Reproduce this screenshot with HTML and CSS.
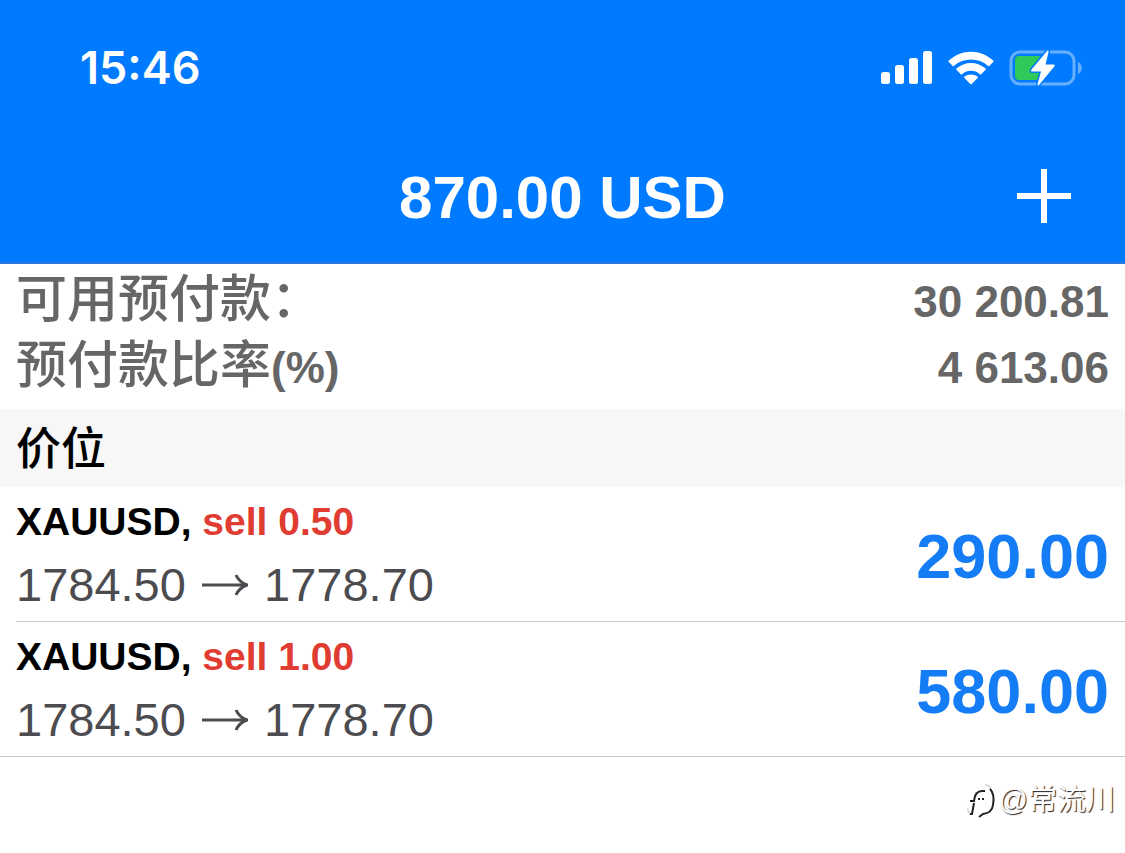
FILE: index.html
```html
<!DOCTYPE html>
<html lang="zh-CN">
<head>
<meta charset="utf-8">
<meta name="viewport" content="width=device-width, initial-scale=1">
<title>870.00 USD</title>
<link rel="stylesheet" href="styles.css">
</head>
<body>
<header class="header">
  <div class="status">
    <time class="clock">15:46</time>
    <div class="indicators">
      <svg class="signal" viewBox="0 0 52 34" aria-hidden="true">
        <rect x="0" y="21" width="9" height="12" rx="2.5"/>
        <rect x="14" y="14" width="9" height="19" rx="2.5"/>
        <rect x="28" y="7" width="9" height="26" rx="2.5"/>
        <rect x="42" y="0" width="9" height="33" rx="2.5"/>
      </svg>
      <svg class="wifi" viewBox="0 0 46 34" aria-hidden="true">
        <path d="M.6 9.800C13-2.400 33-2.400 45.400 9.800Q45.900 10.300 45.400 10.800L41.300 14.900Q40.700 15.500 40.100 14.900C30.500 6.500 15.500 6.500 5.900 14.900Q5.300 15.500 4.700 14.900L.6 10.800Q.1 10.300.6 9.800Z"/>
        <path d="M8.400 17.600C16.500 10 29.500 10 37.600 17.600Q38.200 18.200 37.600 18.800L33.200 23.200Q32.600 23.700 32 23.200C27 18.700 19 18.700 14 23.200Q13.400 23.700 12.800 23.200L8.400 18.800Q7.800 18.200 8.400 17.600Z"/>
        <path d="M16.400 25.700C20.200 22.600 25.800 22.600 29.600 25.700Q30.300 26.300 29.600 27L23.700 33Q23 33.700 22.300 33L16.400 27Q15.700 26.300 16.400 25.700Z"/>
      </svg>
      <svg class="battery" viewBox="0 0 74 38" aria-hidden="true">
        <rect class="battery-case" x="2" y="3" width="63" height="32" rx="9"/>
        <path class="battery-tip" d="M69 13C74 15 74 23 69 25Z"/>
        <rect class="battery-level" x="6" y="7" width="27" height="24" rx="4"/>
        <path class="battery-bolt" d="M38.500 1.500Q40 .5 39.500 3L36.500 15.500H44.500Q46.500 15.500 45.300 17.500L30 36Q28 37.500 28.600 35L32 22.500H23.500Q21 22.500 22.700 20.200Z"/>
      </svg>
    </div>
  </div>
  <div class="navbar">
    <h1 class="title">870.00 USD</h1>
    <button class="add" type="button" aria-label="添加">
      <svg class="plus" viewBox="0 0 54 54" aria-hidden="true"><path d="M27 0V54M0 27H54"/></svg>
    </button>
  </div>
</header>
<main>
  <dl class="summary">
    <div class="summary-row"><dt>可用预付款：</dt><dd>30 200.81</dd></div>
    <div class="summary-row"><dt>预付款比率<span class="unit">(%)</span></dt><dd>4 613.06</dd></div>
  </dl>
  <h2 class="section">价位</h2>
  <ul class="positions">
    <li class="position">
      <div class="details">
        <p class="order">XAUUSD, <span class="side">sell 0.50</span></p>
        <p class="prices">1784.50 <svg class="arrow" viewBox="0 0 46 24" role="img" aria-label="至"><path d="M0 12H44M34 2Q37 9 45 12Q37 15 34 22"/></svg> 1778.70</p>
      </div>
      <span class="profit">290.00</span>
    </li>
    <li class="position">
      <div class="details">
        <p class="order">XAUUSD, <span class="side">sell 1.00</span></p>
        <p class="prices">1784.50 <svg class="arrow" viewBox="0 0 46 24" role="img" aria-label="至"><path d="M0 12H44M34 2Q37 9 45 12Q37 15 34 22"/></svg> 1778.70</p>
      </div>
      <span class="profit">580.00</span>
    </li>
  </ul>
</main>
<footer class="credit">
  <svg class="credit-logo" viewBox="0 0 32 36" aria-hidden="true">
    <path class="logo-light" d="M0 26L3 33M18 3Q23 3 24 8"/>
    <path d="M3 32H5L7 21M3 19H8M7 19Q8 9 15 9H18M11 17H13M15 17H17M23 7Q28 12 26 23Q25 31 16 32L12 35"/>
  </svg>
  <span>@常流川</span>
</footer>
</body>
</html>
```
FILE: styles.css
```css
* {
  box-sizing: border-box;
  margin: 0;
  padding: 0;
}

body {
  background: #fff;
  color: #000;
  font-family: "Liberation Sans", "Noto Sans CJK SC", sans-serif;
}

.header {
  background: #007aff;
  border-bottom: 2px solid #2b78dc;
  color: #fff;
}

.status {
  display: flex;
  align-items: center;
  justify-content: space-between;
  height: 136px;
  padding: 0 42px 0 80px;
}

.clock {
  font: 600 45px/56px Inter, sans-serif;
}

.indicators {
  display: flex;
  align-items: center;
  gap: 15px;
}

.indicators svg {
  fill: #fff;
}

.signal {
  width: 52px;
  height: 34px;
}

.wifi {
  width: 46px;
  height: 34px;
}

.battery {
  width: 74px;
  height: 38px;
}

.indicators .battery-case {
  fill: none;
  stroke: #66afff;
  stroke-width: 3;
}

.indicators .battery-tip {
  fill: #66afff;
}

.indicators .battery-level {
  fill: #30c858;
}

.battery-bolt {
  stroke: #007aff;
  stroke-width: 3;
  paint-order: stroke;
}

.navbar {
  display: grid;
  grid-template-columns: 1fr auto 1fr;
  align-items: center;
  height: 126px;
  padding: 0 54px 6px;
}

.title {
  grid-column: 2;
  padding-top: 4px;
  font-size: 60px;
  line-height: 80px;
}

.add {
  justify-self: end;
  display: flex;
  border: 0;
  background: none;
  cursor: pointer;
}

.plus {
  width: 54px;
  height: 54px;
  stroke: #fff;
  stroke-width: 6;
}

.summary {
  display: grid;
  gap: 4px;
  padding: 0 16px 17px;
  color: #666;
  font-size: 44px;
  font-weight: 700;
  line-height: 62px;
}

.summary-row {
  display: flex;
  align-items: baseline;
  justify-content: space-between;
  height: 62px;
}

.summary dt {
  font-family: "Noto Sans CJK SC", sans-serif;
  font-size: 51px;
  font-weight: 500;
}

.summary .unit {
  font: 700 44px/40px "Liberation Sans", sans-serif;
}

.section {
  padding: 0 16px 4px;
  background: #f7f7f7;
  font: 500 45px/74px "Noto Sans CJK SC", sans-serif;
}

.positions {
  list-style: none;
  border-bottom: 1px solid #c8c8cc;
}

.position {
  display: flex;
  align-items: center;
  justify-content: space-between;
  margin-left: 16px;
  padding: 4px 16px 4px 0;
}

.position + .position {
  border-top: 1px solid #c8c8cc;
}

.order {
  font-size: 39px;
  font-weight: 700;
  line-height: 62px;
}

.side {
  color: #e03c31;
}

.prices {
  color: #4c4c50;
  font: 47px/64px "Liberation Sans", sans-serif;
}

.arrow {
  width: 46px;
  height: 24px;
  margin: 0 3px;
  vertical-align: 4px;
  fill: none;
  stroke: currentColor;
  stroke-width: 3;
}

.profit {
  padding-top: 4px;
  color: #147cf5;
  font-size: 63px;
  font-weight: 700;
  line-height: 80px;
}

.credit {
  display: flex;
  align-items: center;
  justify-content: flex-end;
  padding: 22px 10px;
  color: #fff;
  font: 29px/42px "Liberation Sans", "Noto Sans CJK SC", sans-serif;
  text-shadow: 1px 1px 1px #222;
}

.credit-logo {
  width: 32px;
  height: 36px;
  fill: none;
  stroke: #222;
  stroke-width: 2;
}

.credit-logo .logo-light {
  stroke: #ddd;
}
```
